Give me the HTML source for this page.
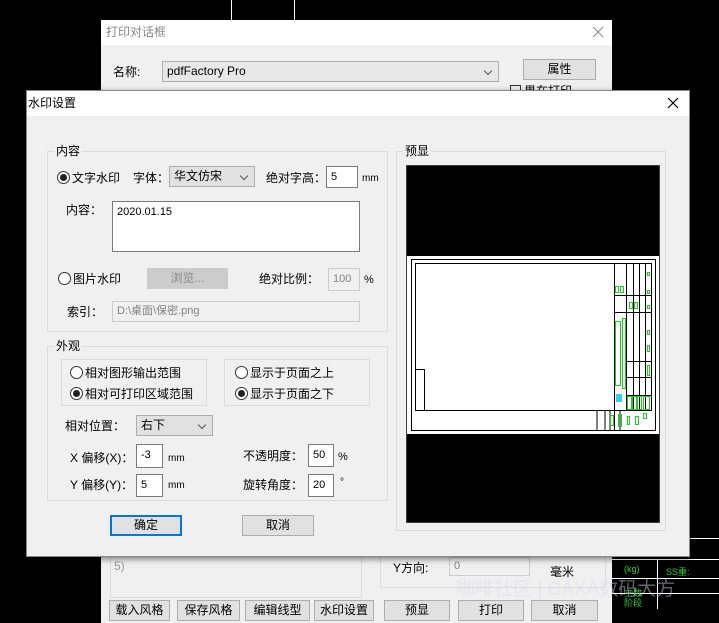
<!DOCTYPE html>
<html><head><meta charset="utf-8"><style>
*{box-sizing:border-box;margin:0;padding:0}
body{width:719px;height:623px;background:#000;position:relative;overflow:hidden;font-family:"Liberation Sans","Noto Sans CJK SC",sans-serif;font-size:12px;color:#000}
.a{position:absolute}
.t{position:absolute;white-space:nowrap;line-height:14px}
.btn{position:absolute;background:#e1e1e1;border:1px solid #adadad;text-align:center;line-height:19px;font-size:12px}
.inp{position:absolute;background:#fff;border:1px solid #7a7a7a;padding-left:4px;line-height:20px;font-size:11px}
.dis{background:#f0f0f0;border-color:#ccc;color:#838383}
.grp{position:absolute;border:1px solid #dcdcdc}
.gt{position:absolute;background:#f0f0f0;padding:0 2px;line-height:14px;top:-8px;left:6px}
.cmb{position:absolute;background:#e1e1e1;border:1px solid #adadad;padding-left:4px;line-height:19px}
.cmb:after{content:"";position:absolute;right:7px;top:6px;width:5px;height:5px;border-right:1px solid #555;border-bottom:1px solid #555;transform:rotate(45deg)}
.rad{position:absolute;width:13px;height:13px;border:1px solid #333;border-radius:50%;background:#fff}
.rad.on:after{content:"";position:absolute;left:2px;top:2px;width:7px;height:7px;border-radius:50%;background:#222}
</style></head><body>
<div class="a" style="left:231px;top:0;width:1px;height:20px;background:#fff"></div>
<div class="a" style="left:294px;top:0;width:1px;height:20px;background:#fff"></div>
<div class="a" style="left:612px;top:559px;width:107px;height:1px;background:#fff"></div>
<div class="a" style="left:612px;top:578px;width:107px;height:1px;background:#fff"></div>
<div class="a" style="left:612px;top:593px;width:107px;height:1px;background:#fff"></div>
<div class="a" style="left:690px;top:538px;width:29px;height:1px;background:#fff"></div>
<div class="a" style="left:657px;top:559px;width:1px;height:50px;background:#fff"></div>
<div class="t" style="left:624px;top:562px;color:#3c3;font-size:9px">(kg)</div>
<div class="t" style="left:666px;top:565px;color:#3c3;font-size:9px">SS重:</div>
<div class="t" style="left:624px;top:588px;color:#3c3;font-size:9px;line-height:10px">主数<br>阶段</div>
<div class="a" style="left:101px;top:20px;width:511px;height:603px;background:#f0f0f0"></div>
<div class="a" style="left:101px;top:20px;width:511px;height:25px;background:#fff"></div>
<div class="t" style="left:106px;top:25px;color:#888">打印对话框</div>
<svg class="a" style="left:592px;top:26px" width="12" height="12"><path d="M1 1L11 11M11 1L1 11" stroke="#888" stroke-width="1"/></svg>
<div class="t" style="left:113px;top:65px">名称:</div>
<div class="cmb" style="left:162px;top:61px;width:337px;height:21px;background:#e8e8e8;line-height:19px">pdfFactory Pro</div>
<div class="btn" style="left:523px;top:59px;width:73px;height:21px">属性</div>
<div class="a" style="left:510px;top:85px;width:11px;height:6px;border:1px solid #333;border-bottom:0"></div>
<div class="a" style="left:524px;top:84px;height:6px;overflow:hidden;font-size:12px;line-height:14px">果在打印</div>
<div class="grp" style="left:110px;top:548px;width:252px;height:50px"></div>
<div class="t" style="left:114px;top:559px;color:#999">5)</div>
<div class="grp" style="left:380px;top:548px;width:226px;height:40px"></div>
<div class="t" style="left:393px;top:561px">Y方向:</div>
<div class="inp dis" style="left:449px;top:557px;width:81px;height:19px;line-height:17px">0</div>
<div class="t" style="left:550px;top:565px">毫米</div>
<div class="btn" style="left:109px;top:600px;width:61px;height:21px">载入风格</div>
<div class="btn" style="left:177px;top:600px;width:63px;height:21px">保存风格</div>
<div class="btn" style="left:245px;top:600px;width:65px;height:21px">编辑线型</div>
<div class="btn" style="left:314px;top:600px;width:60px;height:21px">水印设置</div>
<div class="btn" style="left:384px;top:600px;width:66px;height:21px">预显</div>
<div class="btn" style="left:458px;top:600px;width:66px;height:21px">打印</div>
<div class="btn" style="left:531px;top:600px;width:67px;height:21px">取消</div>
<div class="t" style="left:456px;top:578px;color:rgba(215,215,228,.45);font-size:19px;line-height:24px">咖啡社区 | CAXA数码大方</div>
<div class="a" style="left:26px;top:90px;width:664px;height:467px;background:#f0f0f0;border:1px solid #888;box-shadow:0 2px 6px rgba(0,0,0,.5)"></div>
<div class="a" style="left:27px;top:91px;width:662px;height:25px;background:#fff"></div>
<div class="t" style="left:28px;top:96px">水印设置</div>
<svg class="a" style="left:667px;top:97px" width="12" height="12"><path d="M1 1L11 11M11 1L1 11" stroke="#000" stroke-width="1.2"/></svg>

<div class="grp" style="left:47px;top:151px;width:341px;height:181px"><div class="gt">内容</div></div>
<div class="rad on" style="left:57px;top:171px"></div>
<div class="t" style="left:72px;top:171px">文字水印</div>
<div class="t" style="left:133px;top:171px">字体：</div>
<div class="cmb" style="left:169px;top:166px;width:86px;height:21px">华文仿宋</div>
<div class="t" style="left:266px;top:171px">绝对字高：</div>
<div class="inp" style="left:326px;top:166px;width:32px;height:22px">5</div>
<div class="t" style="left:362px;top:172px;font-size:10px">mm</div>
<div class="t" style="left:66px;top:203px">内容：</div>
<div class="inp" style="left:112px;top:201px;width:248px;height:51px;line-height:20px">2020.01.15</div>
<div class="rad" style="left:58px;top:272px"></div>
<div class="t" style="left:73px;top:272px">图片水印</div>
<div class="btn" style="left:147px;top:268px;width:81px;height:21px;background:#ccc;border-color:#ccc;color:#888">浏览...</div>
<div class="t" style="left:259px;top:272px">绝对比例：</div>
<div class="inp dis" style="left:328px;top:268px;width:32px;height:23px;line-height:21px">100</div>
<div class="t" style="left:364px;top:273px;font-size:11px">%</div>
<div class="t" style="left:67px;top:305px">索引：</div>
<div class="inp dis" style="left:112px;top:301px;width:248px;height:21px;line-height:19px">D:\桌面\保密.png</div>

<div class="grp" style="left:47px;top:346px;width:341px;height:155px"><div class="gt">外观</div></div>
<div class="grp" style="left:61px;top:359px;width:146px;height:47px"></div>
<div class="grp" style="left:224px;top:359px;width:146px;height:47px"></div>
<div class="rad" style="left:70px;top:366px"></div><div class="t" style="left:85px;top:366px">相对图形输出范围</div>
<div class="rad on" style="left:70px;top:387px"></div><div class="t" style="left:85px;top:387px">相对可打印区域范围</div>
<div class="rad" style="left:235px;top:366px"></div><div class="t" style="left:250px;top:366px">显示于页面之上</div>
<div class="rad on" style="left:235px;top:387px"></div><div class="t" style="left:250px;top:387px">显示于页面之下</div>
<div class="t" style="left:65px;top:419px">相对位置：</div>
<div class="cmb" style="left:136px;top:415px;width:77px;height:21px">右下</div>
<div class="t" style="left:70px;top:451px">X 偏移(X)：</div>
<div class="inp" style="left:136px;top:444px;width:27px;height:24px">-3</div>
<div class="t" style="left:168px;top:452px;font-size:10px">mm</div>
<div class="t" style="left:243px;top:449px">不透明度：</div>
<div class="inp" style="left:308px;top:444px;width:26px;height:23px">50</div>
<div class="t" style="left:338px;top:450px;font-size:11px">%</div>
<div class="t" style="left:70px;top:478px">Y 偏移(Y)：</div>
<div class="inp" style="left:136px;top:474px;width:27px;height:23px">5</div>
<div class="t" style="left:168px;top:479px;font-size:10px">mm</div>
<div class="t" style="left:243px;top:478px">旋转角度：</div>
<div class="inp" style="left:308px;top:474px;width:26px;height:23px">20</div>
<div class="t" style="left:340px;top:476px;font-size:10px">°</div>
<div class="btn" style="left:110px;top:515px;width:72px;height:21px;border:2px solid #0078d7;line-height:17px">确定</div>
<div class="btn" style="left:242px;top:515px;width:72px;height:21px">取消</div>

<div class="grp" style="left:396px;top:151px;width:270px;height:380px"><div class="gt">预显</div></div>
<svg class="a" style="left:406px;top:165px" width="254" height="358" viewBox="406 165 254 358">
<rect x="406" y="165" width="254" height="358" fill="#000" stroke="#777"/>
<rect x="407" y="256" width="252" height="178" fill="#fff"/>
<g fill="none" stroke="#000" stroke-width="1">
<rect x="411.5" y="259.5" width="244" height="171"/>
<rect x="415.5" y="263.5" width="236" height="147"/>
<rect x="415.5" y="369.5" width="9" height="41"/>
<line x1="614.5" y1="263" x2="614.5" y2="430"/>
<line x1="626.5" y1="263" x2="626.5" y2="410"/>
<line x1="633.5" y1="263" x2="633.5" y2="410"/>
<line x1="639.5" y1="263" x2="639.5" y2="410"/>
<line x1="645.5" y1="263" x2="645.5" y2="410"/>
<line x1="614" y1="295.5" x2="651" y2="295.5"/>
<line x1="614" y1="312.5" x2="651" y2="312.5"/>
<line x1="626" y1="361.5" x2="651" y2="361.5"/>
<line x1="626" y1="377.5" x2="651" y2="377.5"/>
<line x1="626" y1="395.5" x2="651" y2="395.5"/>
<line x1="597" y1="410" x2="597" y2="430"/>
<line x1="605" y1="410" x2="605" y2="430"/>
<line x1="610" y1="410" x2="610" y2="430"/>
<line x1="620" y1="410" x2="620" y2="430"/>
</g>
<g fill="none" stroke="#2c2" stroke-width="1">
<rect x="615.5" y="286.5" width="3" height="6"/><rect x="620.5" y="286.5" width="3" height="6"/>
<rect x="629.5" y="302.5" width="3" height="6"/><rect x="634.5" y="302.5" width="3" height="6"/>
<rect x="615.5" y="321.5" width="5" height="64"/><rect x="622.5" y="318.5" width="3" height="70"/>
<rect x="627.5" y="396.5" width="4" height="13"/><rect x="632.5" y="396.5" width="4" height="13"/>
<rect x="637.5" y="396.5" width="4" height="13"/><rect x="643.5" y="396.5" width="6" height="13"/>
<rect x="647.5" y="272.5" width="2" height="3"/><rect x="647.5" y="290.5" width="2" height="3"/>
<rect x="647.5" y="305.5" width="2" height="3"/><rect x="647.5" y="330.5" width="2" height="4"/>
<rect x="647.5" y="345.5" width="2" height="6"/><rect x="647.5" y="365.5" width="2" height="10"/>
<rect x="610.5" y="415.5" width="3" height="10"/><rect x="618.5" y="414.5" width="3" height="12"/>
<rect x="627.5" y="416.5" width="2" height="8"/><rect x="635.5" y="416.5" width="3" height="8"/>
<rect x="643.5" y="413.5" width="3" height="5"/>
</g>
<rect x="616" y="394" width="6" height="8" fill="#3cf"/>
</svg>
</body></html>
